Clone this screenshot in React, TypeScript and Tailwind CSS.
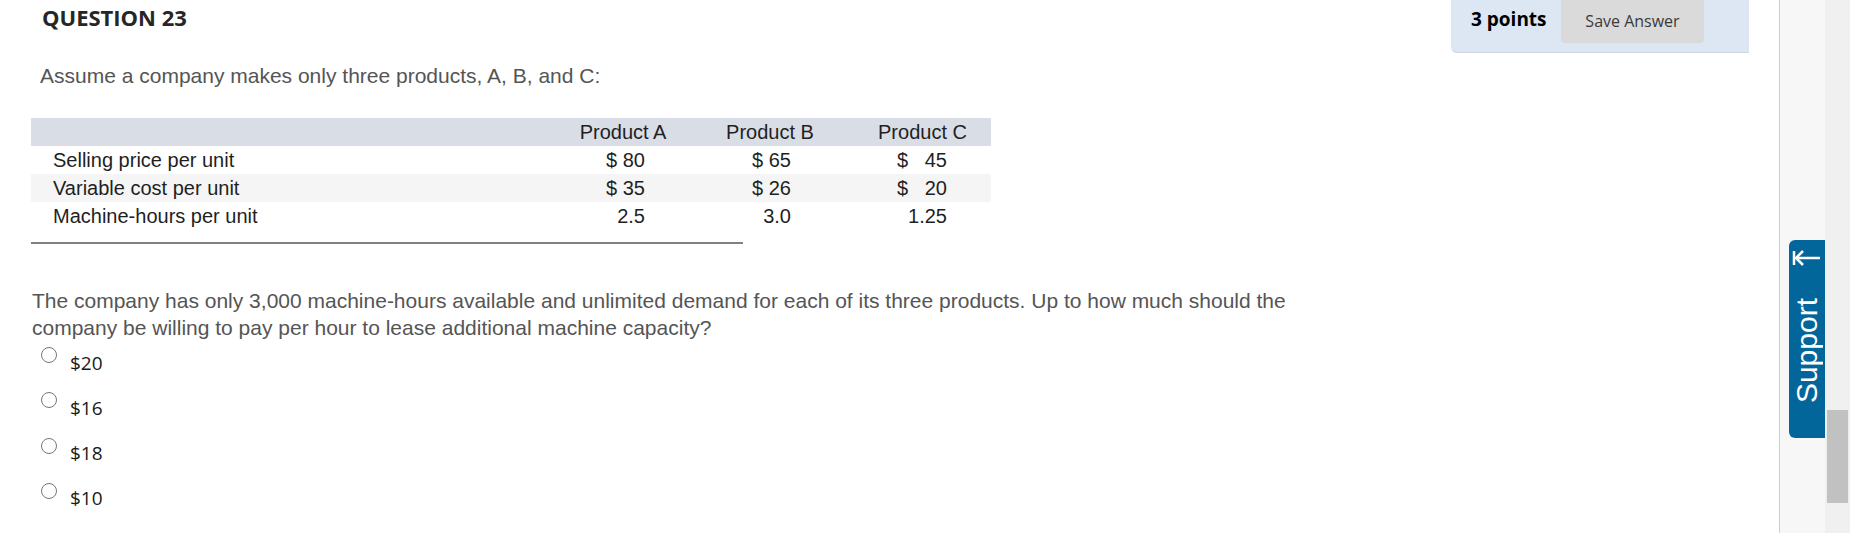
import React from "react";

const rows = [
  { label: "Selling price per unit", a: "$ 80", b: "$ 65", c: "$\u00a0\u00a0\u00a045", bg: "bg-white" },
  { label: "Variable cost per unit", a: "$ 35", b: "$ 26", c: "$\u00a0\u00a0\u00a020", bg: "bg-[#f5f5f5]" },
  { label: "Machine-hours per unit", a: "2.5", b: "3.0", c: "1.25", bg: "bg-white" },
];

const options = ["$20", "$16", "$18", "$10"];

export default function App() {
  return (
    <div className="w-[1850px] h-[533px] flex overflow-hidden bg-white">
      <main className="flex-1 min-w-0 flex flex-col">
        <div className="flex justify-between items-start pr-[30px]">
          <h2 className="pl-[42px] pt-[2px] text-[22px] leading-[30px] font-bold text-[#262626] font-['Open_Sans',sans-serif]">
            QUESTION 23
          </h2>
          <div className="w-[298px] h-[53px] bg-[#dde7f3] rounded-bl-[6px] border-b border-[#c9d6e6] flex items-start font-['Open_Sans',sans-serif]">
            <div className="pl-[20px] pt-[5px] w-[110px] text-[19px] leading-[28px] font-bold text-black">3 points</div>
            <div className="w-[143px] h-[43px] bg-[#dadada] rounded-b-[4px] flex items-center justify-center pb-[2px] text-[16px] text-[#3a3a3a]">
              Save Answer
            </div>
          </div>
        </div>

        <p className="mt-[11px] pl-[40px] text-[21px] leading-[24px] text-[#555555] font-['Liberation_Sans',Arial,sans-serif]">
          Assume a company makes only three products, A, B, and C:
        </p>

        <div className="mt-[30px] ml-[31px] w-[960px] font-['Liberation_Sans',Arial,sans-serif] text-[20px] text-[#1f1f1f]">
          <div className="flex h-[28px] items-center bg-[#d9dde6]">
            <div className="w-[529px]" />
            <div className="w-[126px] text-center">Product A</div>
            <div className="w-[168px] text-center">Product B</div>
            <div className="w-[137px] text-center">Product C</div>
          </div>
          {rows.map((r) => (
            <div key={r.label} className={`flex h-[28px] items-center ${r.bg}`}>
              <div className="w-[529px] pl-[22px]">{r.label}</div>
              <div className="w-[126px] text-right pr-[41px]">{r.a}</div>
              <div className="w-[168px] text-right pr-[63px]">{r.b}</div>
              <div className="w-[137px] text-right pr-[44px] whitespace-pre">{r.c}</div>
            </div>
          ))}
        </div>
        <div className="mt-[12px] ml-[31px] w-[712px] h-[2px] bg-[#808080]" />

        <p className="mt-[43px] pl-[32px] text-[21px] leading-[27px] text-[#555555] font-['Liberation_Sans',Arial,sans-serif]">
          The company has only 3,000 machine-hours available and unlimited demand for each of its three products. Up to how much should the
          <br />
          company be willing to pay per hour to lease additional machine capacity?
        </p>

        <div className="flex flex-col">
          {options.map((o) => (
            <div key={o} className="h-[45.3px] flex items-start pl-[41px]">
              <div className="mt-[6px] w-[16px] h-[16px] rounded-full border-[1.5px] border-[#767676] bg-white" />
              <div className="ml-[13px] mt-[8.5px] text-[19px] leading-[26px] text-[#1a1a1a] font-['Open_Sans',sans-serif]">{o}</div>
            </div>
          ))}
        </div>
      </main>

      <aside className="w-[46px] border-l border-[#cccccc] bg-[#f7f7f7] flex flex-col items-end">
        <div className="mt-[240px] w-[36px] h-[198px] bg-[#03669a] rounded-l-[6px] flex flex-col items-center">
          <svg width="36" height="30" viewBox="0 0 36 30" className="mt-[4px]">
            <g stroke="white" strokeWidth="2.5" fill="none" strokeLinecap="butt">
              <line x1="5" y1="7" x2="5" y2="21" />
              <line x1="7" y1="14" x2="31" y2="14" />
              <polyline points="14,7 7,14 14,21" />
            </g>
          </svg>
          <div className="mt-[24px] [writing-mode:vertical-rl] rotate-180 text-white text-[30px] leading-[30px] font-['Liberation_Sans',Arial,sans-serif]">
            Support
          </div>
        </div>
      </aside>

      <div className="w-[25px] bg-[#f0f0f0] flex flex-col items-center">
        <div className="mt-[410px] w-[21px] h-[93px] bg-[#c1c1c1]" />
      </div>
    </div>
  );
}
